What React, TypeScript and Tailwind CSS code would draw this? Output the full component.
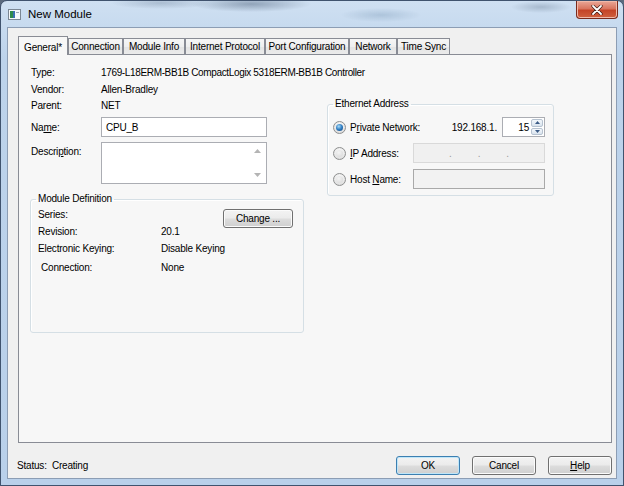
import React from 'react';

const font = "font-['Liberation_Sans',Arial,sans-serif] text-[10px] tracking-[-0.2px] text-black";

const tabs = [
    { label: 'General*', w: 'w-[50px]', active: true },
    { label: 'Connection', w: 'w-[55px]', active: false },
    { label: 'Module Info', w: 'w-[62px]', active: false },
    { label: 'Internet Protocol', w: 'w-[80px]', active: false },
    { label: 'Port Configuration', w: 'w-[84px]', active: false },
    { label: 'Network', w: 'w-[48px]', active: false },
    { label: 'Time Sync', w: 'w-[53px]', active: false },
];

function U({ children }: { children: React.ReactNode }) {
    return <span className="underline underline-offset-[1px] decoration-[1px]">{children}</span>;
}

function Radio({ checked }: { checked?: boolean }) {
    return (
        <span className="flex h-[13px] w-[13px] shrink-0 items-center justify-center rounded-full border border-[#8e8f8f] bg-[radial-gradient(circle_at_50%_35%,#ffffff_0%,#e6e6e6_60%,#cfcfcf_100%)]">
            {checked ? (
                <span className="h-[7px] w-[7px] rounded-full bg-[radial-gradient(circle_at_40%_35%,#a9dcf8_0%,#2f7dc2_50%,#123f74_100%)]" />
            ) : (
                <span className="h-[7px] w-[7px] rounded-full bg-[radial-gradient(circle_at_40%_35%,#f4f4f4_0%,#d6d6d6_100%)]" />
            )}
        </span>
    );
}

function Button({ children, w, isDefault }: { children: React.ReactNode; w: string; isDefault?: boolean }) {
    return (
        <button
            className={`${w} flex h-[19px] items-center justify-center rounded-[3px] border ${
                isDefault
                    ? 'border-[#3c7fb1] shadow-[inset_0_0_0_1px_#bfe6f9]'
                    : 'border-[#707070] shadow-[inset_0_0_0_1px_#fbfbfb]'
            } bg-[linear-gradient(180deg,#f3f3f3_0%,#ebebeb_48%,#dddddd_52%,#cfcfcf_100%)]`}
        >
            {children}
        </button>
    );
}

function TitleIcon() {
    return (
        <svg width="13" height="11" viewBox="0 0 13 11">
            <rect x="0.5" y="0.5" width="12" height="10" fill="#f6f8fa" stroke="#7b8794" />
            <rect x="2" y="2" width="3" height="7" fill="#2f8a4b" />
            <rect x="5" y="2" width="2" height="7" fill="#3a6fb0" />
            <rect x="8" y="3" width="3" height="1" fill="#9aa5b1" />
        </svg>
    );
}

export default function App() {
    return (
        <div className={`${font} h-[486px] w-[624px] overflow-hidden bg-[#5b6a7e]`}>
            <div className="flex h-[486px] w-[624px] flex-col rounded-t-[7px] border border-[#40536e] bg-[linear-gradient(180deg,#cfe0f2_0%,#bdd3eb_12%,#b9d0ea_100%)]">
                {/* title bar */}
                <div className="flex h-[26px] shrink-0 items-start justify-between rounded-t-[6px] bg-[radial-gradient(ellipse_60px_8px_at_250px_3px,rgba(70,90,115,0.45),transparent),radial-gradient(ellipse_50px_6px_at_160px_2px,rgba(90,110,135,0.3),transparent),radial-gradient(ellipse_40px_7px_at_380px_14px,rgba(120,150,180,0.35),transparent),radial-gradient(ellipse_30px_6px_at_540px_6px,rgba(80,100,125,0.3),transparent)]">
                    <div className="flex items-center gap-[7px] pl-[7px] pt-[5px]">
                        <TitleIcon />
                        <span className="text-[11.5px] tracking-normal text-black">New Module</span>
                    </div>
                    <div className="mr-[5px] flex h-[18px] w-[42px] items-center justify-center rounded-b-[4px] border border-t-0 border-[#7a2a1c] bg-[linear-gradient(180deg,#eaa898_0%,#d9755f_45%,#c44427_55%,#d0613f_100%)] shadow-[inset_0_0_0_1px_#f0b9a9]">
                        <svg width="12" height="10" viewBox="0 0 12 10">
                            <path d="M2 1 L10 9 M10 1 L2 9" stroke="#3d1a12" strokeWidth="3.2" strokeLinecap="round" />
                            <path d="M2 1 L10 9 M10 1 L2 9" stroke="#ffffff" strokeWidth="1.8" strokeLinecap="round" />
                        </svg>
                    </div>
                </div>

                {/* client area */}
                <div className="mx-[6px] mb-[6px] flex flex-1 flex-col border border-[#8c9db4] bg-[#f0f0f0]">
                    {/* tabs */}
                    <div className="ml-[10px] mt-[8px] flex h-[18px] items-end">
                        {tabs.map(tab =>
                            tab.active ? (
                                <div
                                    key={tab.label}
                                    className={`${tab.w} relative z-10 -mb-px flex h-[19px] items-start justify-center border border-b-0 border-[#898c95] bg-[#f7f7f7] pt-[3px]`}
                                >
                                    {tab.label}
                                </div>
                            ) : (
                                <div
                                    key={tab.label}
                                    className={`${tab.w} flex h-[16px] items-center justify-center border border-b-0 border-[#898c95] bg-[linear-gradient(180deg,#f6f6f6_0%,#efefef_50%,#e4e4e4_51%,#ebebeb_100%)]`}
                                >
                                    {tab.label}
                                </div>
                            )
                        )}
                    </div>

                    {/* tab panel */}
                    <div className="ml-[10px] flex h-[389px] w-[594px] flex-col border border-[#898c95] bg-[#f7f7f7] pt-[9px]">
                        <div className="flex h-[17px] items-center pl-[12px]">
                            <span className="w-[70px]">Type:</span>
                            <span className="tracking-[-0.35px]">1769-L18ERM-BB1B CompactLogix 5318ERM-BB1B Controller</span>
                        </div>
                        <div className="flex h-[17px] items-center pl-[12px]">
                            <span className="w-[70px]">Vendor:</span>
                            <span>Allen-Bradley</span>
                        </div>

                        <div className="flex pl-[11px]">
                            {/* left column */}
                            <div className="flex w-[274px] flex-col">
                                <div className="flex h-[14px] items-center pl-[1px]">
                                    <span className="w-[70px]">Parent:</span>
                                    <span>NET</span>
                                </div>
                                <div className="mt-[5px] flex h-[20px] items-center pl-[1px]">
                                    <span className="w-[70px]">
                                        Na<U>m</U>e:
                                    </span>
                                    <div className="flex h-[20px] w-[166px] items-center border border-[#abadb3] bg-white pl-[4px]">
                                        CPU_B
                                    </div>
                                </div>
                                <div className="mt-[5px] flex h-[42px] items-start pl-[1px]">
                                    <span className="w-[70px] pt-[2px]">
                                        Descri<U>p</U>tion:
                                    </span>
                                    <div className="flex h-[42px] w-[166px] justify-end border border-[#abadb3] bg-white">
                                        <div className="flex w-[17px] flex-col items-center justify-between py-[6px]">
                                            <svg width="7" height="4" viewBox="0 0 7 4">
                                                <path d="M0 4 L3.5 0 L7 4Z" fill="#b4b4b4" />
                                            </svg>
                                            <svg width="7" height="4" viewBox="0 0 7 4">
                                                <path d="M0 0 L3.5 4 L7 0Z" fill="#b4b4b4" />
                                            </svg>
                                        </div>
                                    </div>
                                </div>

                                <fieldset className="mt-[8px] h-[141px] rounded-[3px] border border-[#d5dfe5] shadow-[inset_1px_1px_0_#ffffff]">
                                    <legend className="ml-[5px] px-[2px] leading-[14px]">Module Definition</legend>
                                    <div className="flex pl-[7px] pr-[10px]">
                                        <div className="flex w-[185px] flex-col">
                                            <div className="flex h-[17px] items-center">
                                                <span className="w-[123px]">Series:</span>
                                            </div>
                                            <div className="flex h-[17px] items-center">
                                                <span className="w-[123px]">Revision:</span>
                                                <span>20.1</span>
                                            </div>
                                        </div>
                                        <div className="mt-[3px]">
                                            <Button w="w-[70px]">Change ...</Button>
                                        </div>
                                    </div>
                                    <div className="flex h-[17px] items-center pl-[7px]">
                                        <span className="w-[123px]">Electronic Keying:</span>
                                        <span>Disable Keying</span>
                                    </div>
                                    <div className="mt-[2px] flex h-[17px] items-center pl-[10px]">
                                        <span className="w-[120px]">Connection:</span>
                                        <span>None</span>
                                    </div>
                                </fieldset>
                            </div>

                            {/* right column */}
                            <fieldset className="-mt-px ml-[23px] h-[99px] w-[227px] rounded-[3px] border border-[#d5dfe5] shadow-[inset_1px_1px_0_#ffffff]">
                                <legend className="ml-[5px] px-[2px] leading-[14px]">Ethernet Address</legend>
                                <div className="mt-[6px] flex h-[20px] items-center pl-[5px] pr-[8px]">
                                    <Radio checked />
                                    <span className="ml-[4px]">
                                        P<U>r</U>ivate Network:
                                    </span>
                                    <span className="ml-auto mr-[5px]">192.168.1.</span>
                                    <div className="flex h-[20px] w-[43px] items-center border border-[#abadb3] bg-white">
                                        <span className="flex-1 pr-[2px] text-right">15</span>
                                        <div className="mr-[1px] flex h-[16px] w-[12px] flex-col gap-px">
                                            <div className="flex flex-1 items-center justify-center rounded-[2px] border border-[#b6c2d0] bg-[linear-gradient(180deg,#f4f8fc,#d9e3ee)]">
                                                <svg width="5" height="3" viewBox="0 0 5 3">
                                                    <path d="M0 3 L2.5 0 L5 3Z" fill="#3b5b86" />
                                                </svg>
                                            </div>
                                            <div className="flex flex-1 items-center justify-center rounded-[2px] border border-[#b6c2d0] bg-[linear-gradient(180deg,#f4f8fc,#d9e3ee)]">
                                                <svg width="5" height="3" viewBox="0 0 5 3">
                                                    <path d="M0 0 L2.5 3 L5 0Z" fill="#3b5b86" />
                                                </svg>
                                            </div>
                                        </div>
                                    </div>
                                </div>
                                <div className="mt-[6px] flex h-[20px] items-center pl-[5px] pr-[8px]">
                                    <Radio />
                                    <span className="ml-[4px]">
                                        <U>I</U>P Address:
                                    </span>
                                    <div className="ml-auto flex h-[20px] w-[132px] items-center justify-around border border-[#d9d9d9] bg-[#f0f0f0] px-[22px] text-[#9a9a9a]">
                                        <span>.</span>
                                        <span>.</span>
                                        <span>.</span>
                                    </div>
                                </div>
                                <div className="mt-[6px] flex h-[20px] items-center pl-[5px] pr-[8px]">
                                    <Radio />
                                    <span className="ml-[4px]">
                                        Host <U>N</U>ame:
                                    </span>
                                    <div className="ml-auto h-[20px] w-[132px] border border-[#a9a9a9] bg-[#f2f2f2]" />
                                </div>
                            </fieldset>
                        </div>
                    </div>

                    {/* status + buttons */}
                    <div className="mt-[13px] flex h-[19px] items-center pl-[9px] pr-[4px]">
                        <span>Status:&nbsp;&nbsp;Creating</span>
                        <div className="ml-auto flex gap-[12px]">
                            <Button w="w-[64px]" isDefault>
                                OK
                            </Button>
                            <Button w="w-[64px]">Cancel</Button>
                            <Button w="w-[64px]">
                                <U>H</U>elp
                            </Button>
                        </div>
                    </div>
                </div>
            </div>
        </div>
    );
}
